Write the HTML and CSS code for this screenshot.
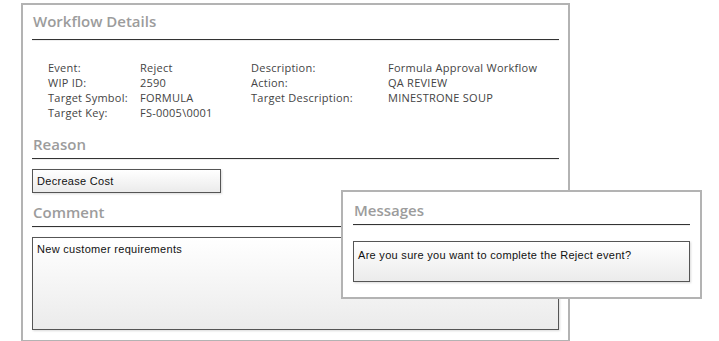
FILE: index.html
```html
<!DOCTYPE html>
<html lang="en">
<head>
  <meta charset="UTF-8">
  <title>Workflow Details</title>
  <link rel="stylesheet" href="styles.css">
</head>
<body>
  <div class="panel">
    <h2 class="section-title">Workflow Details</h2>
    <div class="details">
      <span class="label">Event:</span>
      <span class="value">Reject</span>
      <span class="label">Description:</span>
      <span class="value">Formula Approval Workflow</span>

      <span class="label">WIP ID:</span>
      <span class="value">2590</span>
      <span class="label">Action:</span>
      <span class="value">QA REVIEW</span>

      <span class="label">Target Symbol:</span>
      <span class="value">FORMULA</span>
      <span class="label">Target Description:</span>
      <span class="value">MINESTRONE SOUP</span>

      <span class="label">Target Key:</span>
      <span class="value">FS-0005\0001</span>
    </div>

    <h2 class="section-title reason-title">Reason</h2>
    <div class="field reason">Decrease Cost</div>

    <h2 class="section-title comment-title">Comment</h2>
    <div class="field comment">New customer requirements</div>
  </div>

  <div class="messages">
    <h2 class="section-title">Messages</h2>
    <div class="field message">Are you sure you want to complete the Reject event?</div>
  </div>
</body>
</html>
```

FILE: styles.css
```css
* {
  margin: 0;
  padding: 0;
  box-sizing: border-box;
}
body {
  font-family: 'Liberation Sans', Arial, sans-serif;
  background-color: #fff;
  color: #222;
  position: relative;
  width: 719px;
  height: 341px;
  overflow: hidden;
}
.panel {
  margin: 3px 0 0 21px;
  width: 549px;
  height: 339px;
  border: 2px solid #b3b3b3;
  padding: 7px 9px 0 9px;
  background-color: #fff;
}
.section-title {
  font-family: 'Open Sans', 'Liberation Sans', sans-serif;
  font-size: 15px;
  font-weight: 600;
  line-height: 18px;
  color: #9c9c9c;
  padding: 0 0 5px 1px;
  border-bottom: 1px solid #333;
  box-shadow: 0 1px 0 #eee;
}
.panel > .section-title:first-child {
  padding-bottom: 9px;
}
.details {
  display: grid;
  grid-template-columns: 92px 111px 137px auto;
  margin: 20px 0 0 16px;
  font-family: 'Open Sans', 'Liberation Sans', sans-serif;
  font-size: 11px;
  letter-spacing: 0.25px;
  line-height: 15px;
  color: #444;
}
.reason-title {
  margin-top: 15px;
}
.comment-title {
  margin-top: 10px;
}
.field {
  border: 1px solid #555;
  background: linear-gradient(#fff, #ebebeb);
  box-shadow: 1px 1px 2px rgba(0, 0, 0, 0.15);
  font-size: 11px;
  letter-spacing: 0.3px;
  color: #111;
  padding: 0 4px;
}
.reason {
  width: 189px;
  height: 24px;
  margin-top: 10px;
  line-height: 22px;
}
.comment {
  height: 93px;
  margin-top: 10px;
  padding-top: 5px;
}
.messages {
  position: absolute;
  left: 341px;
  top: 190px;
  width: 361px;
  height: 109px;
  border: 2px solid #b3b3b3;
  background-color: #fff;
  padding: 9px 10px 0 10px;
}
.message {
  margin-top: 16px;
  height: 41px;
  padding-top: 7px;
}
```
